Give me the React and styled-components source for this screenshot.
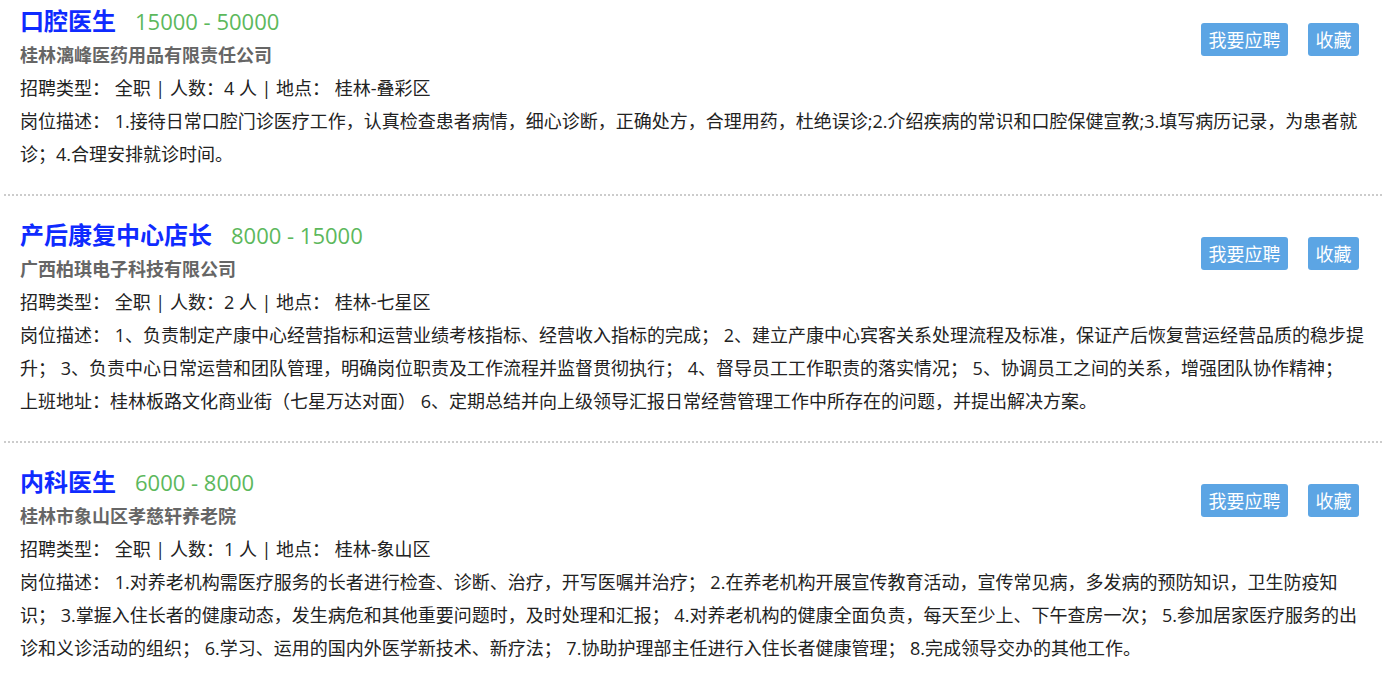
import styled, { createGlobalStyle } from "styled-components";

const GlobalStyle = createGlobalStyle`
  html, body {
    margin: 0;
    padding: 0;
    overflow: hidden;
    background: #fff;
  }
  body {
    font-family: "Open Sans", "Noto Sans CJK SC", sans-serif;
  }
`;

const jobs = [
  {
    title: "口腔医生",
    salary: "15000 - 50000",
    company: "桂林漓峰医药用品有限责任公司",
    count: 4,
    place: "桂林-叠彩区",
    desc: "1.接待日常口腔门诊医疗工作，认真检查患者病情，细心诊断，正确处方，合理用药，杜绝误诊;2.介绍疾病的常识和口腔保健宣教;3.填写病历记录，为患者就诊；4.合理安排就诊时间。",
  },
  {
    title: "产后康复中心店长",
    salary: "8000 - 15000",
    company: "广西柏琪电子科技有限公司",
    count: 2,
    place: "桂林-七星区",
    desc:
      "1、负责制定产康中心经营指标和运营业绩考核指标、经营收入指标的完成； 2、建立产康中心宾客关系处理流程及标准，保证产后恢复营运经营品质的稳步提升； 3、负责中心日常运营和团队管理，明确岗位职责及工作流程并监督贯彻执行； 4、督导员工工作职责的落实情况； 5、协调员工之间的关系，增强团队协作精神；\n上班地址：桂林板路文化商业街（七星万达对面） 6、定期总结并向上级领导汇报日常经营管理工作中所存在的问题，并提出解决方案。",
  },
  {
    title: "内科医生",
    salary: "6000 - 8000",
    company: "桂林市象山区孝慈轩养老院",
    count: 1,
    place: "桂林-象山区",
    desc: "1.对养老机构需医疗服务的长者进行检查、诊断、治疗，开写医嘱并治疗； 2.在养老机构开展宣传教育活动，宣传常见病，多发病的预防知识，卫生防疫知识； 3.掌握入住长者的健康动态，发生病危和其他重要问题时，及时处理和汇报； 4.对养老机构的健康全面负责，每天至少上、下午查房一次； 5.参加居家医疗服务的出诊和义诊活动的组织； 6.学习、运用的国内外医学新技术、新疗法； 7.协助护理部主任进行入住长者健康管理； 8.完成领导交办的其他工作。",
  },
];

export default function App() {
  return (
    <>
      <GlobalStyle />
      <SList>
        {jobs.map((job) => (
          <SItem key={job.title}>
            <SHead>
              <STitle>
                {job.title}
                <SSalary>{job.salary}</SSalary>
              </STitle>
              <SCompany>{job.company}</SCompany>
            </SHead>
            <SActions>
              <SButton>我要应聘</SButton>
              <SButton>收藏</SButton>
            </SActions>
            <SLine>{`招聘类型： 全职 | 人数：${job.count} 人 | 地点： ${job.place}`}</SLine>
            <SLine>{`岗位描述： ${job.desc}`}</SLine>
          </SItem>
        ))}
      </SList>
    </>
  );
}

const SList = styled.div`
  padding-left: 4px;
`;

const SItem = styled.div`
  display: grid;
  grid-template-columns: 1fr auto;
  padding: 20px 12px 23px 16px;
  border-bottom: 2px dotted #ccc;
  color: #222;

  &:first-child {
    padding-top: 2px;
  }
`;

const SHead = styled.div`
  grid-column: 1;
`;

const STitle = styled.div`
  font-size: 24px;
  font-weight: bold;
  line-height: 35px;
  color: #0f2bff;
  font-family: "Noto Sans CJK SC", sans-serif;
`;

const SSalary = styled.span`
  margin-left: 19px;
  font-family: "Open Sans", sans-serif;
  font-size: 22px;
  font-weight: normal;
  color: #5cb85c;
`;

const SCompany = styled.div`
  font-size: 18px;
  font-weight: bold;
  line-height: 33px;
  color: #666;
`;

const SActions = styled.div`
  grid-column: 2;
  display: flex;
  align-items: flex-start;
  gap: 20px;
  padding-top: 21px;
  margin-right: 11px;
`;

const SButton = styled.button`
  height: 33px;
  padding: 0 7.5px;
  border: none;
  border-radius: 3px;
  background: #5ca5e4;
  color: #fff;
  font-family: "Noto Sans CJK SC", sans-serif;
  font-size: 18px;
  line-height: 33px;
  cursor: pointer;
`;

const SLine = styled.div`
  grid-column: 1 / -1;
  font-size: 18px;
  line-height: 33px;
  white-space: pre-line;
`;
